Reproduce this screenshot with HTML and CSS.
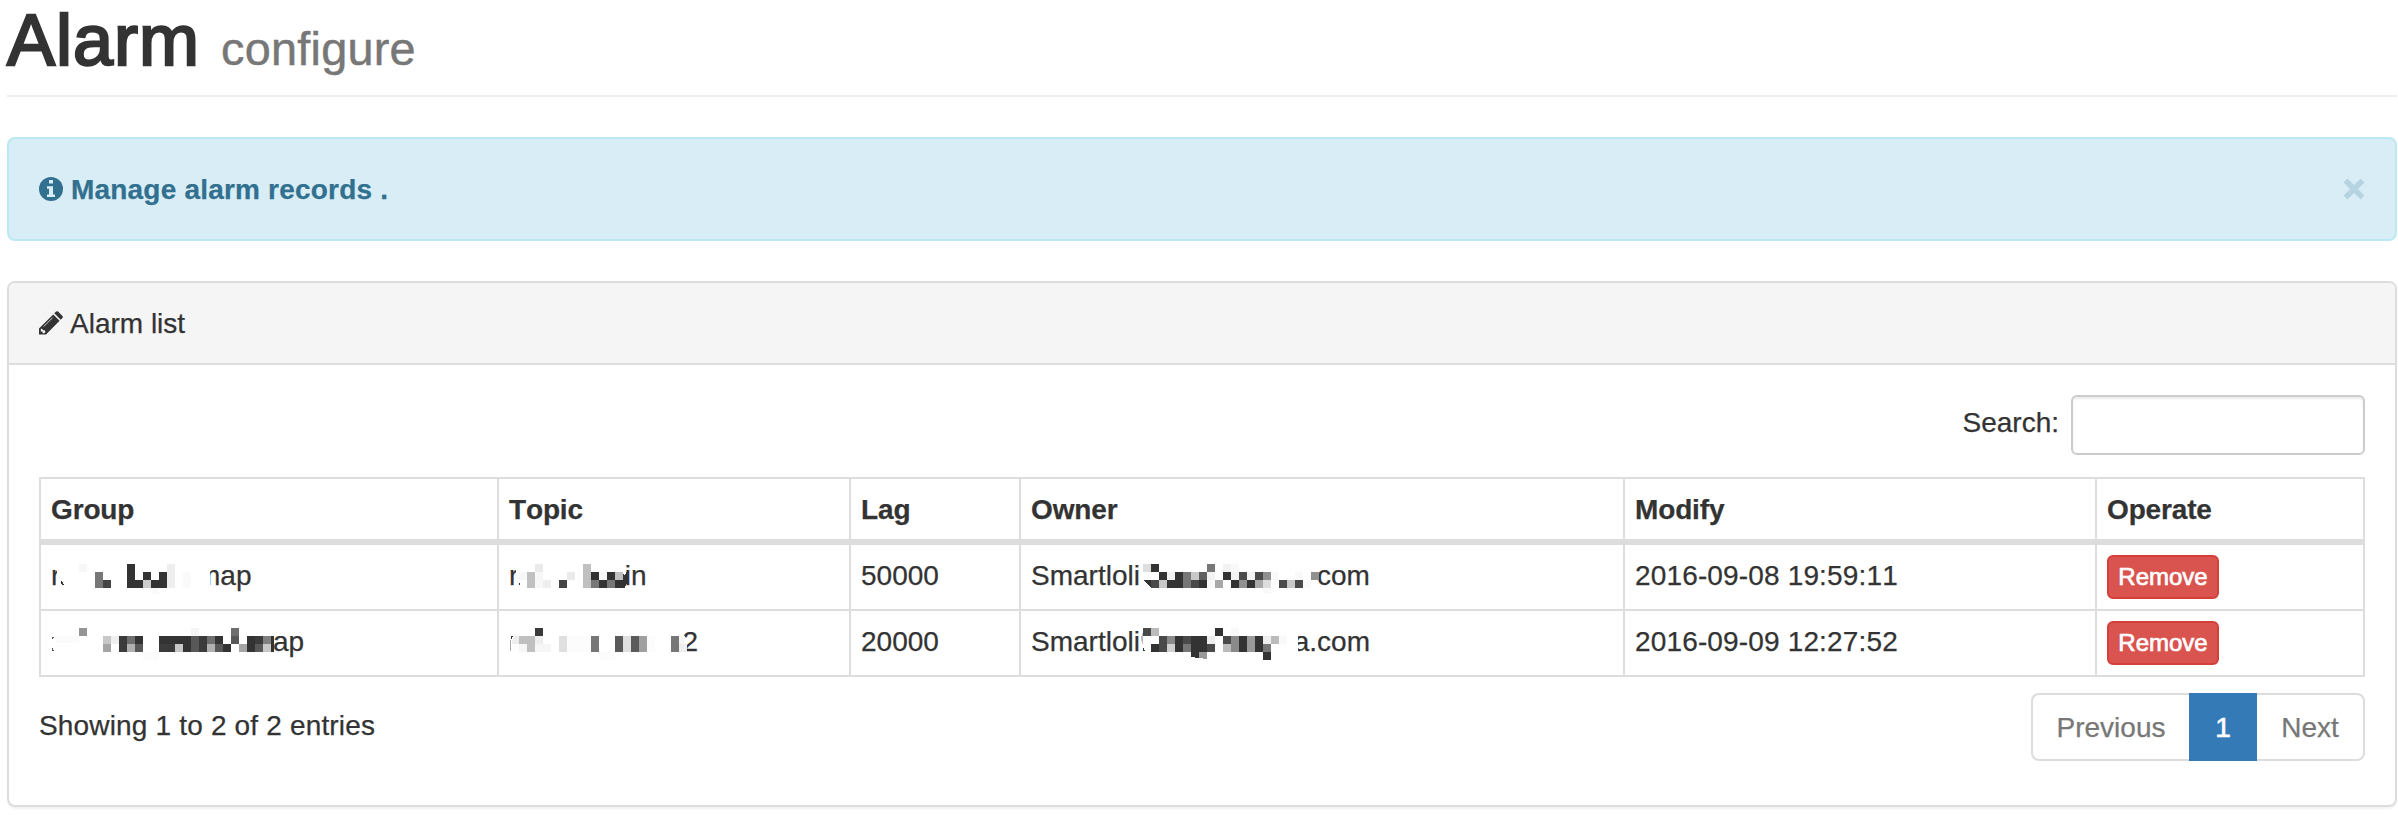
FILE: index.html
```html
<!DOCTYPE html>
<html lang="en">
<head>
<meta charset="utf-8">
<title>Alarm configure</title>
<link rel="stylesheet" href="styles.css">
</head>
<body>
<main class="page">
  <h1 class="page-header">Alarm <small>configure</small></h1>

  <div class="alert">
    <svg class="icon" viewBox="0 0 24 24"><circle cx="12" cy="12" r="12" fill="#31708f"/><path fill="#d9edf7" d="M10 3h4v3.400h-4zM8 9.200h6v8.300h2v2.500H8v-2.500h2v-5.800H8z"/></svg>
    <strong class="alert-text">Manage alarm records .</strong>
    <button class="close" aria-label="Close"><svg class="close-icon" viewBox="0 0 22 22"><path d="M2.500 2.500l17 17M19.500 2.500L2.500 19.500" fill="none" stroke="#31708f" stroke-width="5.400"/></svg></button>
  </div>

  <section class="panel">
    <header class="panel-heading">
      <svg class="icon" viewBox="0 0 24 24"><path fill="#333" d="M14.200 3.400l6.400 6.400L7 23.600H0V17.600zM15.300 2.300l1.800-1.700q1-.9 2 0l4.300 4.300q1 1 0 2L21.700 8.700z"/><path d="M4.700 15.600L13.600 6.700" stroke="#f5f5f5" stroke-width=".8"/><path fill="#f5f5f5" d="M1.800 18.200l1.100-.8 1 1.700 2.100.4.300 1.800-1 1H3.600v-1.700H1.800z"/></svg>
      <span class="panel-title">Alarm list</span>
    </header>
    <div class="panel-body">
      <label class="search"><span class="search-label">Search:</span><input class="search-input" type="text"></label>
      <table class="table">
        <colgroup><col class="c-group"><col class="c-topic"><col class="c-lag"><col class="c-owner"><col class="c-modify"><col class="c-operate"></colgroup>
        <thead><tr><th>Group</th><th>Topic</th><th>Lag</th><th>Owner</th><th>Modify</th><th>Operate</th></tr></thead>
        <tbody>
          <tr>
            <td><div class="masked"><span>r</span><svg class="mosaic m-g1" viewBox="60.3 555 136.7 40"><path fill="#fff" d="M57 560h6v30h-6zM190 560h20v30h-20z"/><path fill="#333" d="M61 580l4 5h-3zM127 564h8v24h-8zM135 580h8v8h-8zM151 580h8v8h-8zM159 572h8v16h-8zM143 572h8v8h-8z"/><path fill="#f7f7f7" d="M79 564h8v8h-8z"/><path fill="#777" d="M95 572h8v16h-8z"/><path fill="#444" d="M103 580h8v8h-8z"/><path fill="#ccc" d="M143 580h8v8h-8z"/><path fill="#eee" d="M167 564h8v24h-8z"/><path fill="#fafafa" d="M183 572h8v16h-8zM151 588h8v6h-8z"/></svg><span>map</span></div></td>
            <td><div class="masked"><span>r</span><svg class="mosaic m-t1" viewBox="518.3 555 106.4 40"><path fill="#fff" d="M516 560h4v30h-4z"/><path fill="#333" d="M519 581l2 4h-2zM591 572h8v8h-8zM599 580h8v8h-8zM607 572h8v8h-8zM615 580h10v8h-10zM623 571q2 8 4 0v12q-1 4-4 5z"/><path fill="#eaeaea" d="M535 564h8v8h-8zM567 572h8v8h-8z"/><path fill="#f7f7f7" d="M519 572h8v8h-8zM535 572h8v16h-8zM599 572h8v8h-8z"/><path fill="#c0c0c0" d="M527 572h8v16h-8zM583 564h8v24h-8zM615 572h8v8h-8z"/><path fill="#eee" d="M543 580h8v8h-8z"/><path fill="#444" d="M559 580h8v8h-8z"/><path fill="#777" d="M591 580h8v8h-8zM607 580h8v8h-8z"/></svg><span>in</span></div></td>
            <td>50000</td>
            <td><div class="masked"><span>Smartloli</span><svg class="mosaic m-o1" viewBox="1139.9 555 177.1 40"><path fill="#333" d="M1143 580h8v8zM1151 564h8v8h-8zM1159 572h8v8h-8zM1167 580h16v8h-16zM1175 572h8v8h-8zM1199 580h8v8h-8zM1223 572h8v8h-8zM1231 580h8v8h-8zM1247 580h8v8h-8z"/><path fill="#ddd" d="M1143 564h8v8h-8zM1263 580h8v8h-8z"/><path fill="#4a4a4a" d="M1151 580h8v8h-8zM1191 580h8v8h-8zM1239 572h8v8h-8zM1255 572h8v8h-8zM1279 580h8v8h-8zM1295 580h8v8h-8z"/><path fill="#c8c8c8" d="M1159 580h8v8h-8zM1191 572h8v8h-8zM1287 580h8v8h-8z"/><path fill="#f2f2f2" d="M1167 572h8v8h-8zM1207 572h8v8h-8zM1223 564h8v8h-8zM1231 572h8v8h-8zM1247 572h8v8h-8z"/><path fill="#777" d="M1183 572h8v16h-8zM1207 564h8v8h-8z"/><path fill="#606060" d="M1199 572h8v8h-8z"/><path fill="#f9f9f9" d="M1207 580h8v8h-8zM1231 564h8v8h-8zM1263 588h8v6h-8zM1271 572h8v8h-8zM1295 572h8v8h-8zM1303 580h8v8h-8z"/><path fill="#a8a8a8" d="M1215 580h8v8h-8zM1255 580h8v8h-8z"/><path fill="#909090" d="M1239 580h8v8h-8zM1263 572h8v8h-8zM1311 572h8v8h-8z"/></svg><span>com</span></div></td>
            <td class="date">2016-09-08 19:59:11</td>
            <td><button class="btn-remove">Remove</button></td>
          </tr>
          <tr>
            <td><div class="masked"><svg class="mosaic m-g2" viewBox="51 621 222 40"><path fill="#555" d="M52 637h2l-2 3zM52 647l2 4h-2z"/><path fill="#fbfbfb" d="M55 636h24v7h-24zM143 652h16v8h-16z"/><path fill="#959595" d="M79 628h8v8h-8z"/><path fill="#c8c8c8" d="M103 636h8v8h-8zM175 644h8v8h-8zM263 644h8v8h-8z"/><path fill="#a5a5a5" d="M103 644h8v8h-8zM239 644h8v8h-8z"/><path fill="#eee" d="M111 636h8v8h-8z"/><path fill="#f5f5f5" d="M191 628h8v8h-8z"/><path fill="#333" d="M135 636h8v8h-8zM159 636h32v8h-32zM183 644h8v8h-8zM215 636h8v8h-8zM223 644h8v8h-8zM247 636h8v16h-8zM271 636h3v16h-3z"/><path fill="#3b3b3b" d="M119 636h8v16h-8zM159 644h16v8h-16zM199 636h8v16h-8zM255 636h8v8h-8z"/><path fill="#6e6e6e" d="M127 636h8v8h-8zM207 636h8v8h-8zM231 628h8v8h-8z"/><path fill="#b0b0b0" d="M127 644h8v8h-8zM207 644h8v8h-8z"/><path fill="#585858" d="M135 644h8v8h-8zM191 636h8v16h-8zM215 644h8v8h-8zM231 636h8v8h-8zM255 644h8v8h-8z"/><path fill="#808080" d="M263 636h8v8h-8z"/></svg><span>ap</span></div></td>
            <td><div class="masked"><svg class="mosaic m-t2" viewBox="509 621 173.5 40"><path fill="#333" d="M511 636h2l-2 4z"/><path fill="#aaa" d="M510 640h1v11h-1z"/><path fill="#3a3a3a" d="M535 628h8v8h-8z"/><path fill="#eee" d="M513 636h6v8h-7zM535 636h8v8h-8zM679 644h8v8h-8z"/><path fill="#c0c0c0" d="M519 636h8v8h-8zM527 636h8v16h-8z"/><path fill="#f6f6f6" d="M519 644h8v8h-8zM535 644h16v8h-16zM679 636h6v8h-6z"/><path fill="#e0e0e0" d="M559 636h8v16h-8zM623 636h8v16h-8z"/><path fill="#fcfcfc" d="M567 636h24v16h-24zM599 652h16v8h-16zM647 636h8v16h-8z"/><path fill="#777" d="M591 636h8v16h-8zM671 636h8v16h-8z"/><path fill="#5a5a5a" d="M615 636h8v16h-8zM631 636h8v16h-8z"/><path fill="#a0a0a0" d="M639 636h8v16h-8z"/></svg><span>2</span></div></td>
            <td>20000</td>
            <td><div class="masked"><span>Smartloli</span><svg class="mosaic m-o2" viewBox="1139.9 621 153.8 40"><path fill="#fff" d="M1290 630h8v25h-8z"/><path fill="#bbb" d="M1143 632q-4 7 0 13q-1-6 0-13zM1151 628h8v8h-8zM1223 644h8v8h-8zM1271 636h8v8h-8z"/><path fill="#4a4a4a" d="M1143 628h8v8h-8zM1159 636h8v16h-8zM1183 636h8v8h-8zM1207 644h8v8h-8zM1223 636h8v8h-8z"/><path fill="#333" d="M1143 647l2 4h-2zM1151 644h8v8h-8zM1175 636h8v16h-8zM1191 636h16v16h-16zM1191 652h8v6l-8-1zM1215 628h8v8h-8zM1239 636h8v16h-8zM1255 636h8v16h-8zM1263 652h8v8h-8z"/><path fill="#8a8a8a" d="M1167 636h8v8h-8zM1231 636h8v16h-8z"/><path fill="#d0d0d0" d="M1167 644h8v8h-8z"/><path fill="#777" d="M1183 644h8v8h-8zM1263 644h8v8h-8z"/><path fill="#999" d="M1199 652h8v7l-8-1zM1247 636h8v16h-8z"/><path fill="#eee" d="M1207 636h8v8h-8zM1263 636h8v8h-8z"/><path fill="#f9f9f9" d="M1231 628h8v8h-8zM1279 636h8v8h-8z"/></svg><span>a.com</span></div></td>
            <td class="date">2016-09-09 12:27:52</td>
            <td><button class="btn-remove">Remove</button></td>
          </tr>
        </tbody>
      </table>
      <footer class="table-footer">
        <div class="info">Showing 1 to 2 of 2 entries</div>
        <nav class="pagination"><span class="page-item prev">Previous</span><span class="page-item active">1</span><span class="page-item next">Next</span></nav>
      </footer>
    </div>
  </section>
</main>
</body>
</html>
```
FILE: styles.css
```css
* { box-sizing: border-box; }
html, body { margin: 0; }
body {
  height: 815px;
  overflow: hidden;
  background: #fff;
  color: #333;
  font-family: "Liberation Sans", Arial, sans-serif;
  font-size: 28px;
  line-height: 40px;
  font-kerning: none;
  -webkit-text-stroke: .25px currentColor;
}
.page { padding: 0 1px 0 7px; }
.page-header {
  height: 97px;
  margin: 0 0 40px;
  border-bottom: 2px solid #eee;
  font-size: 72px;
  line-height: 80px;
  font-weight: 400;
  letter-spacing: 1px;
  -webkit-text-stroke: 2.4px #333;
}
.page-header small {
  color: #777;
  font-size: 46.8px;
  line-height: 1;
  letter-spacing: .25px;
  -webkit-text-stroke: .5px #777;
}
.alert {
  display: flex;
  align-items: center;
  height: 104px;
  margin-bottom: 40px;
  padding: 0 30px;
  border: 2px solid #bce8f1;
  border-radius: 8px;
  background: #d9edf7;
  color: #31708f;
}
.icon { flex: none; width: 24px; height: 24px; margin-right: 8px; }
.alert-text { padding-top: 2px; letter-spacing: .2px; }
.panel-title { padding-top: 2px; margin-left: -1px; }
.close { display: flex; margin-left: auto; padding: 0; border: 0; background: none; opacity: .2; }
.close-icon { width: 22px; height: 22px; }
.panel {
  height: 526px;
  border: 2px solid #ddd;
  border-radius: 8px;
  box-shadow: 0 2px 2px rgba(0, 0, 0, .05);
}
.panel-heading {
  display: flex;
  align-items: center;
  height: 82px;
  padding: 0 30px;
  border-bottom: 2px solid #ddd;
  border-radius: 6px 6px 0 0;
  background: #f5f5f5;
}
.panel-body { padding: 30px; }
.search {
  display: flex;
  justify-content: flex-end;
  align-items: center;
  gap: 12px;
  height: 60px;
  margin-bottom: 22px;
}
.search-label { padding-bottom: 5px; }
.search-input {
  width: 294px;
  height: 60px;
  border: 2px solid #ccc;
  border-radius: 6px;
  background: #fff;
  box-shadow: inset 0 2px 2px rgba(0, 0, 0, .075);
}
.table {
  width: 2326px;
  table-layout: fixed;
  border-collapse: separate;
  border-spacing: 0;
  border-top: 2px solid #ddd;
  border-left: 2px solid #ddd;
}
.c-group { width: 458px; }
.c-topic { width: 352px; }
.c-lag { width: 170px; }
.c-owner { width: 604px; }
.c-modify { width: 472px; }
.c-operate { width: 268px; }
.table th, .table td {
  height: 66px;
  padding: 11px 10px 9px;
  border-right: 2px solid #ddd;
  border-bottom: 2px solid #ddd;
  text-align: left;
  vertical-align: top;
  white-space: nowrap;
}
.table th { border-bottom-width: 6px; letter-spacing: -.15px; }
.table .date { letter-spacing: .15px; }
.masked { display: flex; height: 40px; }
.mosaic { flex: none; position: relative; height: 40px; margin-top: -1px; overflow: visible; shape-rendering: crispEdges; }
.m-g1 { width: 136.7px; }
.m-t1 { width: 106.4px; }
.m-o1 { width: 177.1px; }
.m-g2 { width: 222px; }
.m-t2 { width: 173.5px; }
.m-o2 { width: 153.8px; }
.btn-remove {
  display: block;
  width: 112px;
  height: 44px;
  margin-top: -1px;
  padding: 0;
  border: 2px solid #d43f3a;
  border-radius: 6px;
  background: #d9534f;
  color: #fff;
  font: 24px/40px "Liberation Sans", Arial, sans-serif;
  -webkit-text-stroke: .7px #fff;
}
.table-footer { display: flex; justify-content: space-between; padding-top: 16px; }
.info { padding-top: 13px; letter-spacing: .17px; }
.pagination { display: flex; height: 68px; color: #777; line-height: 66px; text-align: center; }
.page-item { border: 2px solid #ddd; }
.prev { width: 158px; border-right: 0; border-radius: 8px 0 0 8px; }
.active { width: 68px; border-color: #337ab7; background: #337ab7; color: #fff; -webkit-text-stroke: .7px #fff; }
.next { width: 108px; border-left: 0; border-radius: 0 8px 8px 0; }
```
